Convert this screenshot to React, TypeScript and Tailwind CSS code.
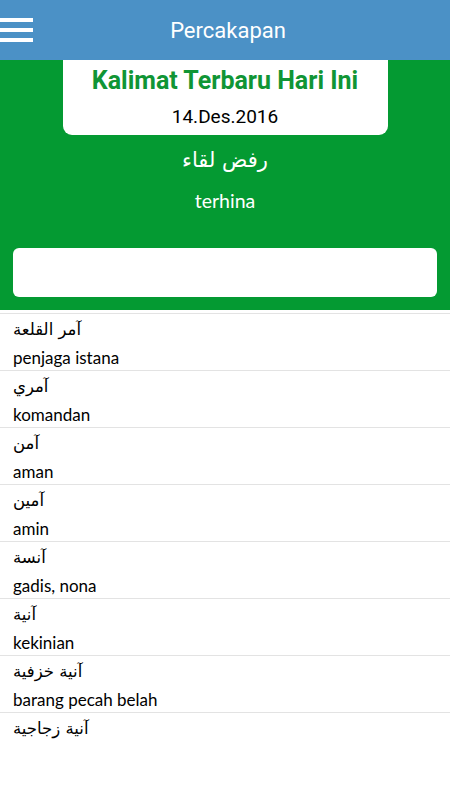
import React from 'react';

const words = [
  { ar: 'آمر القصر', id: 'pemimpin' },
  { ar: 'آمر القلعة', id: 'penjaga istana' },
  { ar: 'آمري', id: 'komandan' },
  { ar: 'آمن', id: 'aman' },
  { ar: 'آمين', id: 'amin' },
  { ar: 'آنسة', id: 'gadis, nona' },
  { ar: 'آنية', id: 'kekinian' },
  { ar: 'آنية خزفية', id: 'barang pecah belah' },
  { ar: 'آنية زجاجية', id: '' },
];

const App = () => {
  return (
    <div className="w-[450px] h-[800px] bg-white overflow-hidden flex flex-col">
      {/* Header */}
      <div className="h-[60px] shrink-0 bg-[#4b91c6] flex items-center relative">
        <div className="absolute left-0 top-[18px] flex flex-col gap-[6px]">
          <div className="w-[33px] h-[4px] bg-white" />
          <div className="w-[33px] h-[4px] bg-white" />
          <div className="w-[33px] h-[4px] bg-white" />
        </div>
        <h1 className="flex-1 text-center text-white text-[22px] font-['Roboto',sans-serif] pl-[6px]">
          Percakapan
        </h1>
      </div>

      {/* Kalimat hari ini */}
      <div className="h-[250px] shrink-0 bg-[#049a32] flex flex-col items-center">
        <div className="w-[325px] h-[75px] bg-white rounded-b-[9px] flex flex-col items-center font-['Roboto',sans-serif]">
          <p className="text-[25px] font-bold text-[#109535] leading-[30px] mt-[6px]">Kalimat Terbaru Hari Ini</p>
          <p className="text-[19px] text-black leading-[24px] mt-[9px]">14.Des.2016</p>
        </div>
        <p className="text-white text-[21px] leading-[30px] mt-[10px] font-['DejaVu_Sans',sans-serif]">رفض لقاء</p>
        <p className="text-white text-[19.5px] leading-[26px] mt-[13px] font-['Lato',sans-serif]">terhina</p>
        <div className="w-[424px] h-[49px] bg-white rounded-[6px] mt-[34px]" />
      </div>

      {/* Daftar kata */}
      <div className="flex-1 overflow-hidden">
        <div className="-mt-[53px] font-['Lato','DejaVu_Sans',sans-serif] text-black">
          {words.map((w) => (
            <div key={w.ar} className={`px-[13px] ${w.id ? 'border-b border-[#e3e3e3]' : ''}`}>
              <p className="h-[32px] leading-[32px] text-[16.5px] font-['DejaVu_Sans',sans-serif]" dir="rtl" style={{ textAlign: 'left' }}>
                <span dir="rtl">{w.ar}</span>
              </p>
              {w.id && <p className="h-[24px] leading-[24px] text-[17px]">{w.id}</p>}
            </div>
          ))}
        </div>
      </div>
    </div>
  );
};

export default App;
